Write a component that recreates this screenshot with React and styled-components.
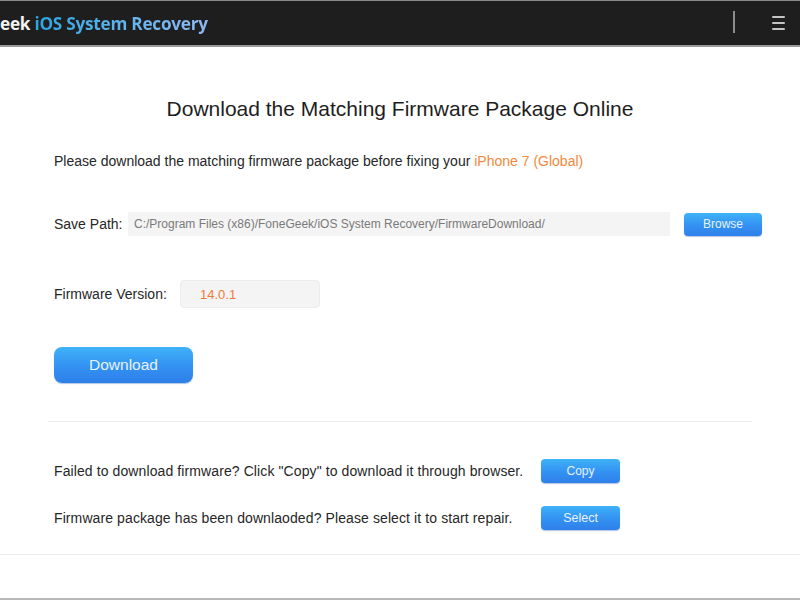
import React from "react";
import styled, { createGlobalStyle } from "styled-components";

const Global = createGlobalStyle`
  html, body { margin: 0; padding: 0; background: #ffffff; }
  body { font-family: "Liberation Sans", Arial, sans-serif; color: #2a2a2a; }
  * { box-sizing: border-box; }
`;

const Page = styled.div`
  width: 800px;
  height: 600px;
  display: flex;
  flex-direction: column;
  background: #fff;
  overflow: hidden;
`;

const TopBar = styled.header`
  height: 47px;
  flex: none;
  display: flex;
  align-items: center;
  background: #1e1e1e;
  border-top: 1px solid #8a8a8a;
  border-bottom: 2px solid #9a9a9a;
  padding-right: 15px;
`;

const Brand = styled.div`
  font-family: "Open Sans", "Lato", sans-serif;
  font-weight: 700;
  font-size: 17.2px;
  letter-spacing: -0.25px;
  margin-left: 0;
  margin-top: 1px;
  white-space: nowrap;
`;

const BrandLight = styled.span`
  color: #f2f2f2;
`;

const BrandBlue = styled.span`
  background: linear-gradient(90deg, #2aa6e4 0%, #5fb4ee 50%, #8fb9f2 100%);
  -webkit-background-clip: text;
  background-clip: text;
  color: transparent;
`;

const Spacer = styled.div`
  flex: 1;
`;

const VDivider = styled.div`
  width: 2px;
  height: 22px;
  background: #8c8c8c;
  margin-top: -2px;
  margin-right: 37px;
`;

const Menu = styled.div`
  width: 13px;
  display: flex;
  flex-direction: column;
  gap: 4px;
  margin-top: -1px;
  span {
    display: block;
    height: 2px;
    border-radius: 1px;
    background: #c4c4c4;
  }
`;

const Main = styled.main`
  flex: 1;
  display: flex;
  flex-direction: column;
`;

const Heading = styled.h1`
  margin: 49px 0 0;
  font-size: 21px;
  line-height: 25px;
  font-weight: 400;
  text-align: center;
  color: #1e1e1e;
`;

const Section = styled.div`
  padding-left: 54px;
  display: flex;
  flex-direction: column;
`;

const Para = styled.p`
  margin: 32px 0 0;
  font-size: 14px;
  line-height: 16px;
  color: #262626;
`;

const Highlight = styled.span`
  color: #f5883a;
`;

const FieldRow = styled.div`
  display: flex;
  align-items: center;
  margin-top: ${(p) => p.$top}px;
`;

const Label = styled.span`
  font-size: 14px;
  color: #262626;
  white-space: nowrap;
  width: ${(p) => p.$w}px;
  flex: none;
`;

const Field = styled.div`
  width: ${(p) => p.$w}px;
  height: ${(p) => p.$h}px;
  background: #f4f4f4;
  border: 1px solid ${(p) => (p.$soft ? "#ececec" : "#f4f4f4")};
  border-radius: ${(p) => (p.$soft ? 4 : 2)}px;
  display: flex;
  align-items: center;
  padding-left: ${(p) => p.$pad}px;
  font-size: ${(p) => p.$fs}px;
  color: ${(p) => p.$color};
  white-space: nowrap;
  overflow: hidden;
`;

const BlueButton = styled.button`
  width: ${(p) => p.$w}px;
  height: ${(p) => p.$h}px;
  border: none;
  border-radius: ${(p) => p.$r}px;
  background: linear-gradient(180deg, #3fb2f8 0%, #3391f2 55%, #2f7fe9 100%);
  box-shadow: 0 1px 1px rgba(30, 90, 180, 0.35);
  color: #e6f3ff;
  font-family: "Liberation Sans", Arial, sans-serif;
  font-size: ${(p) => p.$fs}px;
  padding: 0;
  margin-left: ${(p) => p.$ml || 0}px;
  flex: none;
  cursor: pointer;
`;

const DownloadWrap = styled.div`
  margin-top: 39px;
`;

const Divider = styled.hr`
  border: none;
  height: 1px;
  background: #ececec;
  margin: ${(p) => p.$top}px ${(p) => (p.$full ? 0 : 48)}px 0;
`;

const ActionRow = styled.div`
  display: grid;
  grid-template-columns: 487px 79px;
  align-items: center;
  margin-top: ${(p) => p.$top}px;
`;

const ActionText = styled.span`
  font-size: 14px;
  letter-spacing: 0.1px;
  color: #262626;
  white-space: nowrap;
`;

const BottomEdge = styled.div`
  margin-top: auto;
  height: 2px;
  background: #b8b8b8;
`;

export default function App() {
  return (
    <>
      <Global />
      <Page>
        <TopBar>
          <Brand>
            <BrandLight>eek </BrandLight>
            <BrandBlue>iOS System Recovery</BrandBlue>
          </Brand>
          <Spacer />
          <VDivider />
          <Menu>
            <span />
            <span />
            <span />
          </Menu>
        </TopBar>
        <Main>
          <Heading>Download the Matching Firmware Package Online</Heading>
          <Section>
            <Para>
              Please download the matching firmware package before fixing your{" "}
              <Highlight>iPhone 7 (Global)</Highlight>
            </Para>
            <FieldRow $top={43}>
              <Label $w={74}>Save Path:</Label>
              <Field $w={542} $h={24} $pad={5} $fs={12} $color="#7a7a7a">
                C:/Program Files (x86)/FoneGeek/iOS System Recovery/FirmwareDownload/
              </Field>
              <BlueButton $w={78} $h={23} $r={4} $fs={12} $ml={14}>
                Browse
              </BlueButton>
            </FieldRow>
            <FieldRow $top={44}>
              <Label $w={126}>Firmware Version:</Label>
              <Field $w={140} $h={28} $pad={19} $fs={13} $color="#f07a3a" $soft>
                14.0.1
              </Field>
            </FieldRow>
            <DownloadWrap>
              <BlueButton $w={139} $h={36} $r={8} $fs={15.5}>
                Download
              </BlueButton>
            </DownloadWrap>
          </Section>
          <Divider $top={38} />
          <Section>
            <ActionRow $top={37}>
              <ActionText>
                Failed to download firmware? Click "Copy" to download it through browser.
              </ActionText>
              <BlueButton $w={79} $h={24} $r={4} $fs={12}>
                Copy
              </BlueButton>
            </ActionRow>
            <ActionRow $top={23}>
              <ActionText>
                Firmware package has been downlaoded? Please select it to start repair.
              </ActionText>
              <BlueButton $w={79} $h={24} $r={4} $fs={12.5}>
                Select
              </BlueButton>
            </ActionRow>
          </Section>
          <Divider $top={24} $full />
          <BottomEdge />
        </Main>
      </Page>
    </>
  );
}
